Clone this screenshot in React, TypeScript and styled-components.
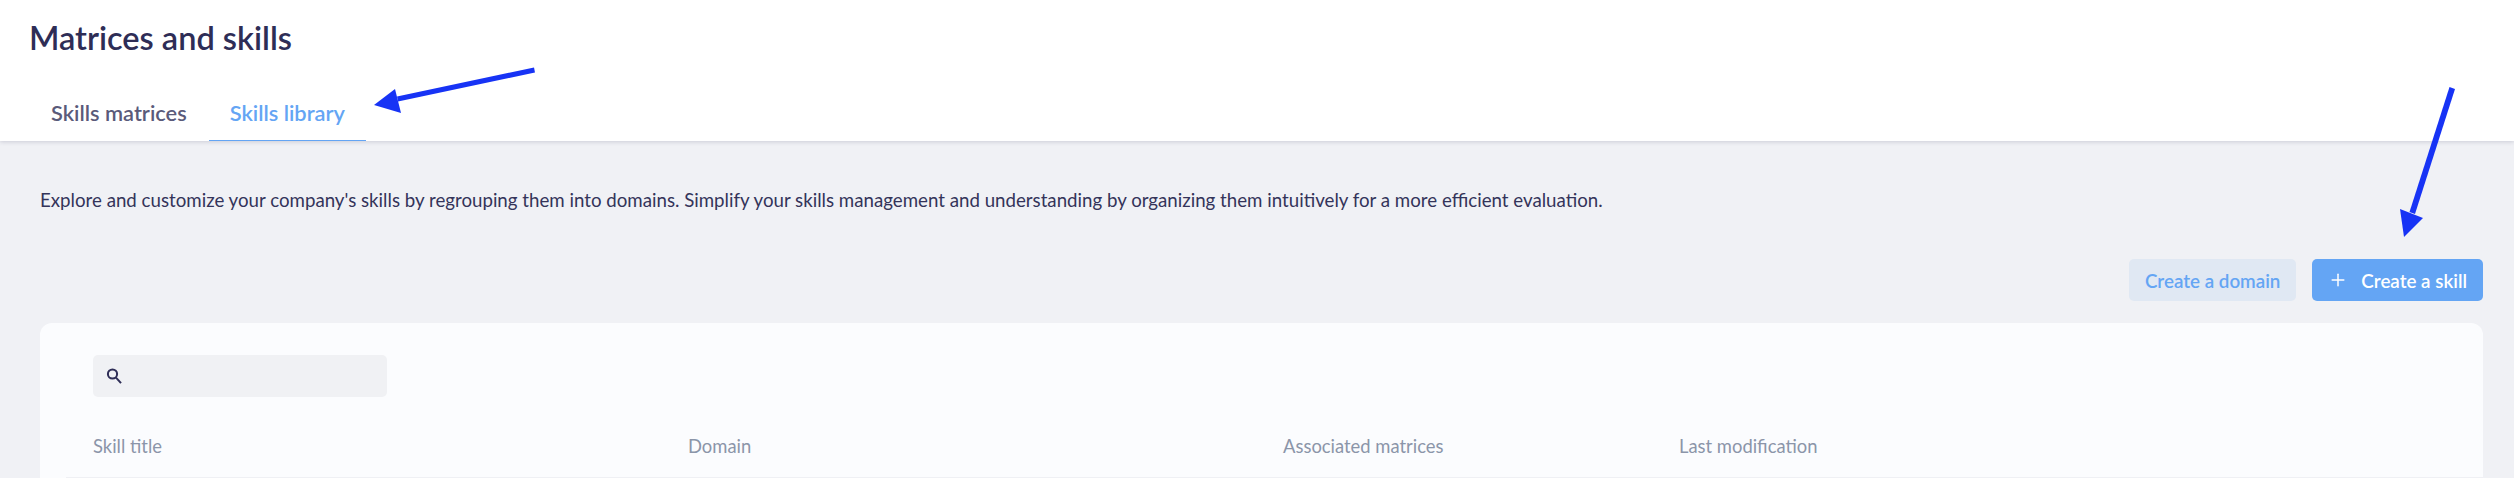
import React from "react";
import styled, { createGlobalStyle } from "styled-components";
import { Plus } from "lucide-react";

const GlobalStyle = createGlobalStyle`
  html, body {
    margin: 0;
    padding: 0;
    height: 478px;
    overflow: hidden;
    background: #f0f1f5;
    font-family: "Lato", "Liberation Sans", sans-serif;
  }
`;

const Page = styled.div`
  position: relative;
  width: 2514px;
  height: 478px;
  overflow: hidden;
`;

const Header = styled.header`
  height: 141px;
  background: #fff;
  box-shadow: 0 1px 4px rgba(40, 40, 80, 0.18);
  display: flex;
  flex-direction: column;
  justify-content: space-between;
`;

const Title = styled.h1`
  margin: 0;
  padding: 19px 0 0 29px;
  font-size: 32.5px;
  line-height: 38px;
  font-weight: 600;
  color: #2e2d56;
`;

const Tabs = styled.nav`
  display: flex;
  padding-left: 30px;
  gap: 1px;
`;

const Tab = styled.div<{ $active?: boolean }>`
  padding: 0 21px;
  height: 54px;
  line-height: 52px;
  box-sizing: border-box;
  font-size: 21.8px;
  font-weight: 600;
  color: ${(p) => (p.$active ? "#64a5f4" : "#5a5a7a")};
  border-bottom: 1px solid ${(p) => (p.$active ? "#64a5f4" : "transparent")};
`;

const Content = styled.main`
  padding: 46px 31px 0 40px;
`;

const Intro = styled.p`
  margin: 0;
  font-size: 18.7px;
  line-height: 26px;
  color: #34345a;
`;

const Actions = styled.div`
  display: flex;
  justify-content: flex-end;
  gap: 16px;
  margin-top: 46px;
`;

const Button = styled.button<{ $primary?: boolean }>`
  display: flex;
  align-items: center;
  gap: 13px;
  height: 42px;
  padding: 0 16px;
  border: none;
  border-radius: 5px;
  font-family: inherit;
  font-size: 18.8px;
  font-weight: 600;
  background: ${(p) => (p.$primary ? "#64a5f4" : "#e0e8f3")};
  color: ${(p) => (p.$primary ? "#fff" : "#64a5f4")};
`;

const Card = styled.section`
  margin-top: 22px;
  background: #fbfcfe;
  border-radius: 12px 12px 0 0;
  padding: 32px 0 0 26px;
  height: 200px;
`;

const Search = styled.div`
  display: flex;
  align-items: center;
  width: 294px;
  height: 42px;
  margin-left: 27px;
  padding-left: 13px;
  box-sizing: border-box;
  background: #f0f1f4;
  border-radius: 5px;
`;

const TableHead = styled.div`
  display: grid;
  grid-template-columns: 595px 595px 396px 1fr;
  margin-top: 34px;
  padding: 0 0 16px 27px;
  height: 47px;
  box-sizing: border-box;
  align-items: center;
  border-bottom: 1px solid #eff0f4;
`;

const HeadCell = styled.div`
  font-size: 18.4px;
  color: #8b95a9;
`;

// annotation arrows sit over the page
const Arrows = styled.svg`
  position: absolute;
  inset: 0;
  pointer-events: none;
`;

export default function App() {
  return (
    <Page>
      <GlobalStyle />
      <Header>
        <Title>Matrices and skills</Title>
        <Tabs>
          <Tab>Skills matrices</Tab>
          <Tab $active>Skills library</Tab>
        </Tabs>
      </Header>
      <Content>
        <Intro>
          Explore and customize your company's skills by regrouping them into domains. Simplify your skills management
          and understanding by organizing them intuitively for a more efficient evaluation.
        </Intro>
        <Actions>
          <Button>Create a domain</Button>
          <Button $primary>
            <Plus size={20} strokeWidth={1.8} />
            Create a skill
          </Button>
        </Actions>
        <Card>
          <Search>
            <svg width="16" height="18" viewBox="0 0 16 18" fill="none" stroke="#2e2d56" strokeWidth="2">
              <circle cx="6.5" cy="7" r="4.6" />
              <path d="M10 10.6l5 5.6" />
            </svg>
          </Search>
          <TableHead>
            <HeadCell>Skill title</HeadCell>
            <HeadCell>Domain</HeadCell>
            <HeadCell>Associated matrices</HeadCell>
            <HeadCell>Last modification</HeadCell>
          </TableHead>
        </Card>
      </Content>
      <Arrows width="2514" height="478" viewBox="0 0 2514 478">
        <g fill="#1733f5" stroke="none">
          <path d="M534 67.500l1 5-137 29-1-5z" />
          <path d="M374 105l21-16 6 24z" />
          <path d="M2449.500 87l5.500 2-40 125-5.500-2z" />
          <path d="M2404 237l-4-28 23 9z" />
        </g>
      </Arrows>
    </Page>
  );
}
